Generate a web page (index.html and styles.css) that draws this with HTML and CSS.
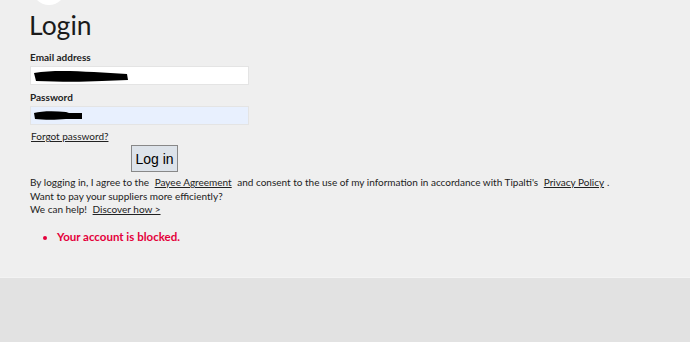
FILE: index.html
```html
<!DOCTYPE html>
<html lang="en">
<head>
    <meta charset="UTF-8">
    <meta name="viewport" content="width=device-width, initial-scale=1.0">
    <title>Login</title>
    <link rel="stylesheet" href="styles.css">
</head>
<body>
    <div class="page">
        <div class="logo"></div>

        <h1>Login</h1>

        <div class="form-group">
            <label for="email">Email address</label>
            <div class="field">
                <input type="text" id="email">
                <svg class="scribble" width="100" height="14" viewBox="0 0 100 14">
                    <path d="M2 4 C20 1 40 2 62 3 L95 5 L96 11 L70 12 C50 13 30 13 4 12 Z" fill="#000"/>
                </svg>
            </div>
        </div>

        <div class="form-group">
            <label for="password">Password</label>
            <div class="field">
                <input type="password" id="password" class="autofill">
                <svg class="scribble" width="52" height="12" viewBox="0 0 52 12">
                    <path d="M2 4 C10 2 22 2 34 3 L37 4 L50 4 L50 10 L34 10 C24 11 12 11 3 10 Z" fill="#000"/>
                </svg>
            </div>
        </div>

        <a href="#" class="forgot">Forgot password?</a>

        <div class="actions">
            <button>Log in</button>
        </div>

        <div class="terms">
            <p>By logging in, I agree to the <a href="#">Payee Agreement</a> and consent to the use of my information in accordance with Tipalti's <a href="#">Privacy Policy</a>.</p>
            <p>Want to pay your suppliers more efficiently?</p>
            <p>We can help! <a href="#">Discover how &gt;</a></p>
        </div>

        <ul class="errors">
            <li>Your account is blocked.</li>
        </ul>
    </div>
    <div class="footer"></div>
</body>
</html>
```

FILE: styles.css
```css
body {
    font-family: Lato, 'Open Sans', sans-serif;
    background-color: #e2e2e2;
    color: #222;
    margin: 0;
}

.page {
    background-color: #efefef;
    padding: 0 30px 0 30px;
    height: 277px;
    border-bottom: 1px solid #f3f3f3;
    overflow: hidden;
}

.logo {
    width: 34px;
    height: 34px;
    margin: -29px 0 0 2px;
    border-radius: 50%;
    background-color: #fff;
}

h1 {
    font-size: 26.5px;
    font-weight: 400;
    margin: 3px 0 8px -1px;
    line-height: 34px;
    color: #1a1a1a;
}

.form-group {
    margin-bottom: 5px;
}

label {
    display: block;
    font-size: 10px;
    font-weight: 700;
    line-height: 14px;
    margin-bottom: 2px;
}

.field {
    position: relative;
    width: 219px;
}

input {
    display: block;
    box-sizing: border-box;
    width: 219px;
    height: 19px;
    border: 1px solid #e4e4e4;
    background-color: #fff;
    margin: 0;
}

input.autofill {
    background-color: #e8f0fe;
}

.scribble {
    position: absolute;
    left: 2px;
    top: 3px;
}

.forgot {
    display: block;
    width: fit-content;
    margin: -1px 0 0 1px;
    font-size: 10px;
    line-height: 14px;
    color: #222;
}

.actions {
    padding: 2px 0 0 101px;
    line-height: 0;
}

button {
    font-family: 'Liberation Sans', Arial, sans-serif;
    font-size: 14px;
    width: 47px;
    height: 27px;
    padding: 0;
    background-color: #dde3ea;
    border: 1px solid #888;
    color: #000;
    cursor: pointer;
}

.terms {
    margin-top: 4px;
    font-size: 10px;
    line-height: 13.5px;
}

.terms p {
    margin: 0;
    white-space: nowrap;
}

.terms a {
    color: #222;
    margin: 0 3px;
}

.errors {
    margin: 13px 0 0 0;
    padding-left: 27px;
    color: #e4003b;
    font-size: 11.5px;
    font-weight: 700;
    line-height: 14px;
}

.footer {
    height: 64px;
}
```
